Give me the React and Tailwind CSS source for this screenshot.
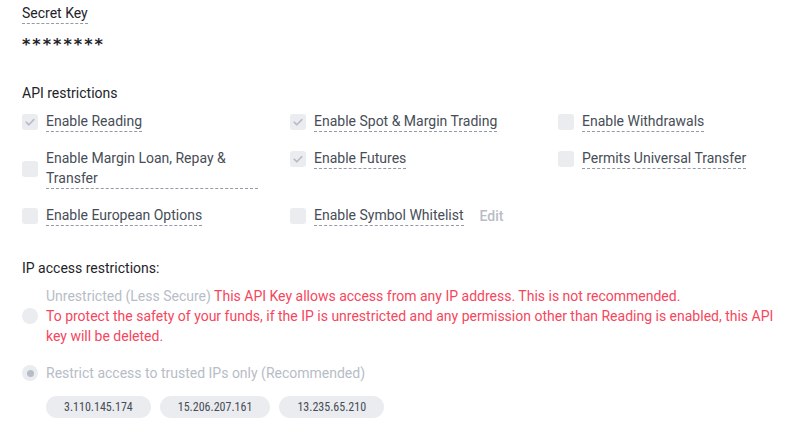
import React from 'react';

const CheckIcon = () => (
    <svg width="12" height="12" viewBox="0 0 12 12" fill="none">
        <path d="M2.2 6.2 L4.9 8.8 L9.8 3.6" stroke="#b7bdc6" strokeWidth="1.6" strokeLinecap="round" strokeLinejoin="round" />
    </svg>
);

// one permission cell: box + dashed label
const Permission = ({ label, checked, extra, wide }) => (
    <div className="flex items-center">
        <div className="w-4 h-4 shrink-0 rounded-[3px] bg-[#eaecef] flex items-center justify-center">
            {checked && <CheckIcon />}
        </div>
        <span
            className={`ml-2 text-sm leading-5 text-[#474d57] border-b border-dashed border-[#929aa5] ${wide ? 'block w-[212px]' : 'inline-block'}`}
        >
            {label}
        </span>
        {extra}
    </div>
);

const ips = ['3.110.145.174', '15.206.207.161', '13.235.65.210'];

const App = () => {
    return (
        <div className="bg-white min-h-[439px] pl-[22px] pt-px font-['Roboto',sans-serif]">
            {/* Secret key */}
            <span className="inline-block text-sm leading-5 text-[#1e2329] border-b border-dashed border-[#929aa5]">
                Secret Key
            </span>
            <div className="mt-2 text-base leading-6 font-bold text-[#1e2329] tracking-[2px] font-['DejaVu_Sans',sans-serif]">********</div>

            {/* API restrictions */}
            <div className="mt-[26px] text-sm leading-5 text-[#1e2329]">API restrictions</div>
            <div className="mt-2 w-[772px] grid grid-cols-3 gap-x-8 gap-y-4 items-start">
                <Permission label="Enable Reading" checked />
                <Permission label="Enable Spot & Margin Trading" checked />
                <Permission label="Enable Withdrawals" />
                <Permission label="Enable Margin Loan, Repay & Transfer" wide />
                <Permission label="Enable Futures" checked />
                <Permission label="Permits Universal Transfer" />
                <Permission label="Enable European Options" />
                <Permission
                    label="Enable Symbol Whitelist"
                    extra={<span className="ml-4 text-sm font-medium text-[#b7bdc6]">Edit</span>}
                />
            </div>

            {/* IP access restrictions */}
            <div className="mt-8 text-sm leading-5 text-[#1e2329]">IP access restrictions:</div>
            <div className="mt-2 flex items-center">
                <div className="w-4 h-4 shrink-0 rounded-full bg-[#eaecef]"></div>
                <p className="ml-2 w-[740px] text-sm leading-5 text-[#f6465d]">
                    <span className="text-[#b7bdc6]">Unrestricted (Less Secure)</span>{' '}
                    This API Key allows access from any IP address. This is not recommended.
                    <br />
                    To protect the safety of your funds, if the IP is unrestricted and any permission other than Reading is enabled, this API key will be deleted.
                </p>
            </div>
            <div className="mt-[17px] flex items-center">
                <div className="w-4 h-4 shrink-0 rounded-full bg-[#eaecef] flex items-center justify-center">
                    <div className="w-[7px] h-[7px] rounded-full bg-[#b7bdc6]"></div>
                </div>
                <span className="ml-2 text-sm leading-5 text-[#b7bdc6]">Restrict access to trusted IPs only (Recommended)</span>
            </div>
            <div className="mt-[13px] ml-6 flex gap-[9px]">
                {ips.map((ip) => (
                    <span key={ip} className="h-[22px] px-[18px] rounded-full bg-[#eaecef] text-xs leading-[22px] text-[#474d57] font-['Roboto_Condensed','Roboto',sans-serif]">
                        {ip}
                    </span>
                ))}
            </div>
        </div>
    );
};

export default App;
